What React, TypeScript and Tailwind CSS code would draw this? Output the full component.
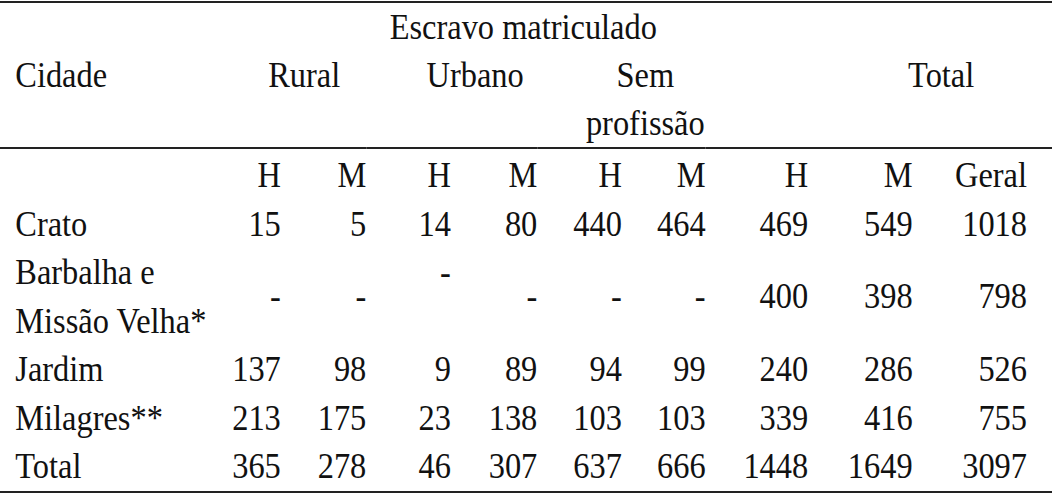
const colWidths = [
  'w-[230px]',
  'w-[82px]',
  'w-[95px]',
  'w-[94px]',
  'w-[96px]',
  'w-[94px]',
  'w-[93px]',
  'w-[114px]',
  'w-[116px]',
  'w-[155px]',
]

const rows: (string | number)[][] = [
  ['Crato', 15, 5, 14, 80, 440, 464, 469, 549, 1018],
  ['Jardim', 137, 98, 9, 89, 94, 99, 240, 286, 526],
  ['Milagres**', 213, 175, 23, 138, 103, 103, 339, 416, 755],
  ['Total', 365, 278, 46, 307, 637, 666, 1448, 1649, 3097],
]

const sub = ['H', 'M', 'H', 'M', 'H', 'M', 'H', 'M', 'Geral']

const num = 'p-0 text-right align-middle font-normal leading-[48.5px]'
const last = 'pr-[28px]'

function DataRow({ cells }: { cells: (string | number)[] }) {
  return (
    <tr>
      <td className="p-0 pl-[17px] text-left leading-[48.5px]">{cells[0]}</td>
      {cells.slice(1).map((c, i) => (
        <td key={i} className={`${num} ${i === 8 ? last : ''}`}>
          {c}
        </td>
      ))}
    </tr>
  )
}

export default function App() {
  return (
    <main className="w-[1052px] h-[495px] overflow-hidden bg-white pt-px font-[Liberation_Serif,Times_New_Roman,serif]">
      <div className="w-[1169px] origin-top-left scale-x-90 border-t-2 border-b-2 border-[#222] text-[36px] text-[#111]">
        <table className="w-full table-fixed border-separate border-spacing-0 font-[Liberation_Serif,Times_New_Roman,serif]">
          <colgroup>
            {colWidths.map((w, i) => (
              <col key={i} className={w} />
            ))}
          </colgroup>
          <thead>
            <tr>
              <th className="p-0 font-normal leading-[48px]"></th>
              <th colSpan={9} className="p-0 pl-[203px] text-left font-normal leading-[48px] whitespace-nowrap">
                Escravo matriculado
              </th>
            </tr>
            <tr>
              <th className="p-0 pl-[17px] text-left align-top font-normal leading-[48px] border-b-2 border-[#222]">
                Cidade
              </th>
              <th colSpan={2} className="p-0 pl-[68px] text-left align-top font-normal leading-[48px] border-b-2 border-[#222]">
                Rural
              </th>
              <th colSpan={2} className="p-0 pl-[67px] text-left align-top font-normal leading-[48px] border-b-2 border-[#222]">
                Urbano
              </th>
              <th colSpan={2} className="p-0 pl-[53px] text-center align-top font-normal leading-[48px] whitespace-nowrap border-b-2 border-[#222]">
                Sem
                <br />
                profissão
              </th>
              <th colSpan={3} className="p-0 pl-[225px] text-left align-top font-normal leading-[48px] border-b-2 border-[#222]">
                Total
              </th>
            </tr>
          </thead>
          <tbody>
            <tr>
              <td className="p-0 pt-[2px] leading-[48.5px]"></td>
              {sub.map((s, i) => (
                <td key={i} className={`${num} pt-[2px] ${i === 8 ? last : ''}`}>
                  {s}
                </td>
              ))}
            </tr>
            <DataRow cells={rows[0]} />
            <tr>
              <td className="p-0 pl-[17px] text-left leading-[48.5px]">
                Barbalha e
                <br />
                Missão Velha*
              </td>
              <td className={num}>-</td>
              <td className={num}>-</td>
              <td className="p-0 text-right align-top leading-[48.5px]">-</td>
              <td className={num}>-</td>
              <td className={num}>-</td>
              <td className={num}>-</td>
              <td className={num}>400</td>
              <td className={num}>398</td>
              <td className={`${num} ${last}`}>798</td>
            </tr>
            {rows.slice(1).map((r, i) => (
              <DataRow key={i} cells={r} />
            ))}
          </tbody>
        </table>
      </div>
    </main>
  )
}
